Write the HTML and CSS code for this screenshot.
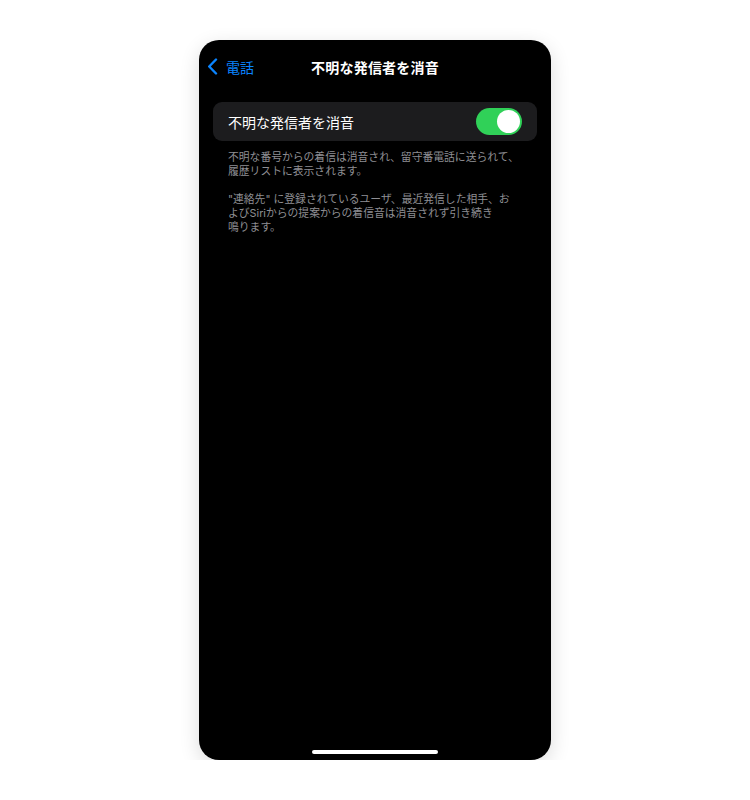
FILE: index.html
```html
<!DOCTYPE html>
<html lang="ja">
<head>
<meta charset="utf-8">
<link rel="stylesheet" href="styles.css">
</head>
<body>
<div class="stage">
  <div class="phone">
    <div class="nav">
      <div class="back">
        <svg class="chev" width="11" height="17" viewBox="0 0 11 17"><path d="M9 1.5 L2.2 8.5 L9 15.5" fill="none" stroke="#0a84ff" stroke-width="2.4" stroke-linecap="round" stroke-linejoin="round"/></svg>
        <span class="back-label">電話</span>
      </div>
      <div class="title">不明な発信者を消音</div>
    </div>
    <div class="content">
      <div class="group">
        <div class="row">
          <span class="row-label">不明な発信者を消音</span>
          <span class="toggle"><span class="knob"></span></span>
        </div>
      </div>
      <div class="footer">
        <p>不明な番号からの着信は消音され、留守番電話に送られて、<br>履歴リストに表示されます。</p>
        <p>"連絡先" に登録されているユーザ、最近発信した相手、お<br>よびSiriからの提案からの着信音は消音されず引き続き<br>鳴ります。</p>
      </div>
    </div>
    <div class="home"></div>
  </div>
</div>
</body>
</html>
```
FILE: styles.css
```css
html, body {
  margin: 0;
  padding: 0;
  background: #ffffff;
}
body {
  font-family: "Noto Sans CJK JP", "Noto Sans", sans-serif;
}
.stage {
  display: flex;
  justify-content: center;
  padding-top: 40px;
}
.phone {
  width: 352px;
  height: 720px;
  background: #000000;
  border-radius: 20px;
  box-shadow: 0 6px 20px rgba(0, 0, 0, 0.14);
  display: flex;
  flex-direction: column;
  overflow: hidden;
}
.nav {
  height: 54px;
  display: grid;
  grid-template-columns: 1fr auto 1fr;
  align-items: center;
  padding: 0 8px;
}
.back {
  display: flex;
  align-items: center;
  gap: 8px;
  color: #0a84ff;
}
.chev {
  display: block;
  margin-top: -1px;
}
.back-label {
  font-size: 14px;
  line-height: 20px;
}
.title {
  color: #ffffff;
  font-size: 14px;
  font-weight: 700;
  line-height: 20px;
  letter-spacing: 0.2px;
}
.content {
  flex: 1;
  padding: 8px 14px 0;
}
.group {
  background: #1c1c1e;
  border-radius: 9px;
}
.row {
  height: 39px;
  display: flex;
  align-items: center;
  justify-content: space-between;
  padding: 0 15px;
}
.row-label {
  color: #ffffff;
  font-size: 14px;
  line-height: 20px;
}
.toggle {
  width: 46px;
  height: 27px;
  border-radius: 14px;
  background: #30d158;
  display: flex;
  align-items: center;
  justify-content: flex-end;
  padding: 0 2px;
  box-sizing: border-box;
}
.knob {
  width: 23px;
  height: 23px;
  border-radius: 50%;
  background: #ffffff;
}
.footer {
  padding: 10px 15px 0;
  color: #8e8e93;
  font-family: Inter, "Noto Sans CJK JP", sans-serif;
  font-size: 10.8px;
  line-height: 14px;
}
.footer p {
  margin: 0 0 14px;
}
.home {
  width: 126px;
  height: 4px;
  border-radius: 2px;
  background: #ffffff;
  margin: 0 auto 6px;
}
```
